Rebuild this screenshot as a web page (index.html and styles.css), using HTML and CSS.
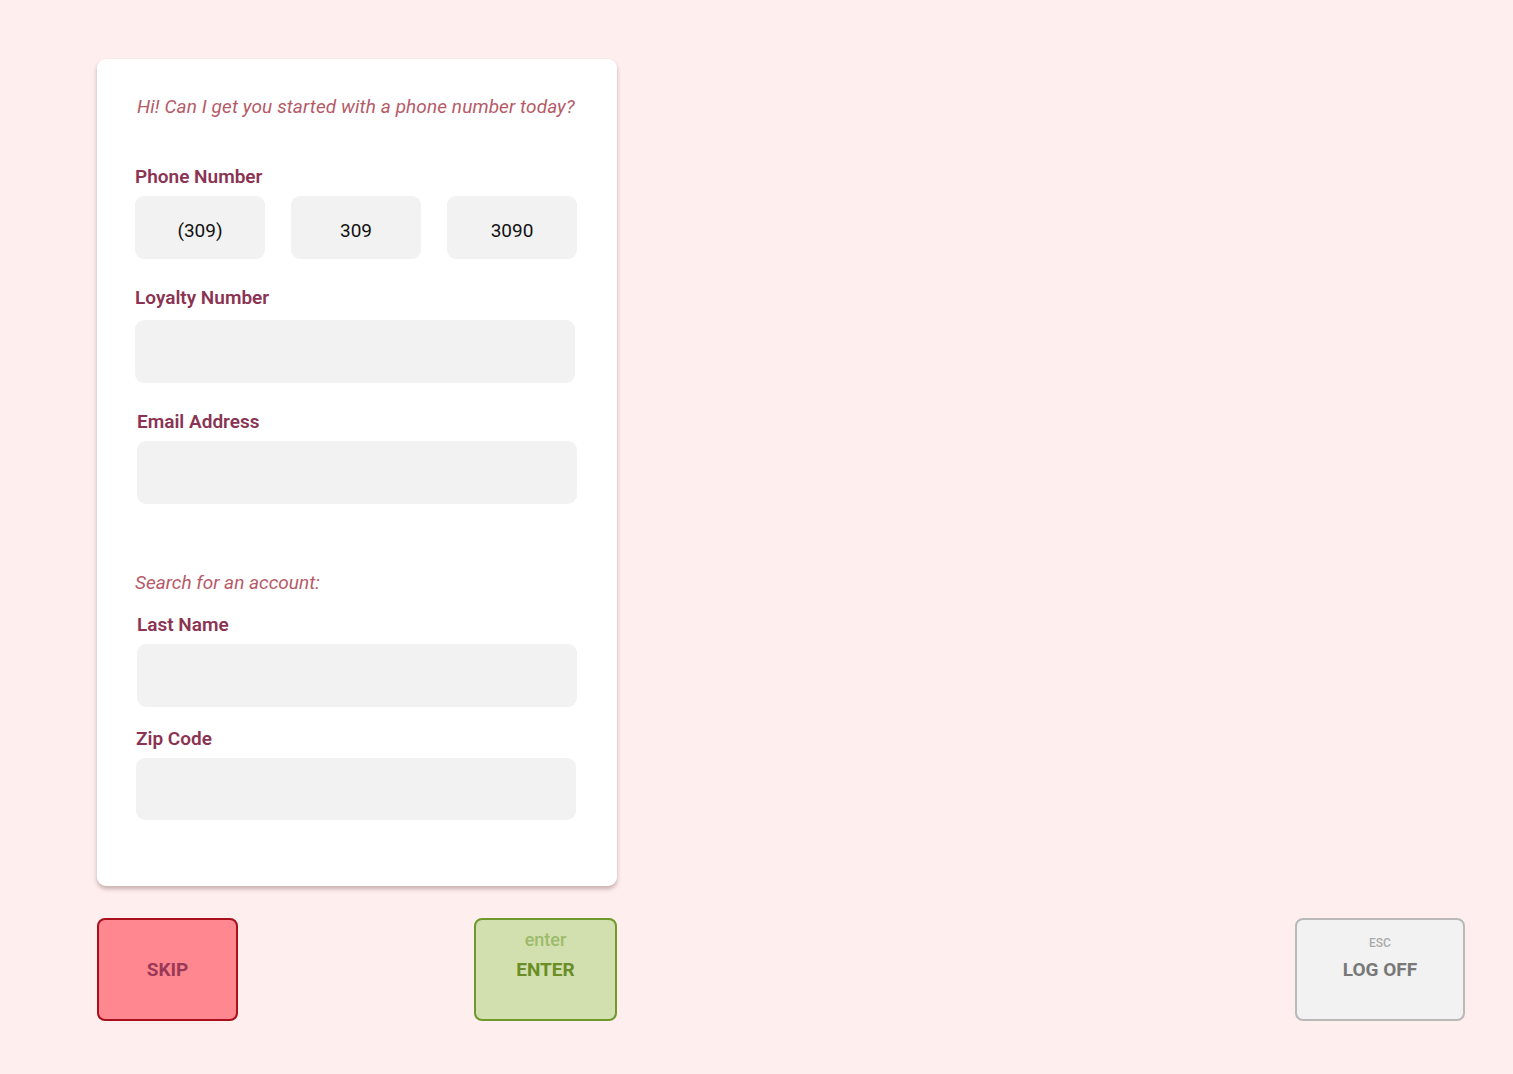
FILE: index.html
```html
<!DOCTYPE html>
<html lang="en">
<head>
<meta charset="utf-8">
<title>Customer Lookup</title>
<link rel="stylesheet" href="styles.css">
</head>
<body>
<main class="page">
  <section class="card">
    <p class="prompt greeting">Hi! Can I get you started with a phone number today?</p>

    <div class="field phone-field">
      <label class="label">Phone Number</label>
      <div class="phone-row">
        <div class="input center">(309)</div>
        <div class="input center">309</div>
        <div class="input center">3090</div>
      </div>
    </div>

    <div class="field loyalty-field">
      <label class="label">Loyalty Number</label>
      <div class="input loyalty"></div>
    </div>

    <div class="field email-field shift2">
      <label class="label">Email Address</label>
      <div class="input email"></div>
    </div>

    <p class="prompt search">Search for an account:</p>

    <div class="field lastname-field shift2">
      <label class="label">Last Name</label>
      <div class="input"></div>
    </div>

    <div class="field zip-field shift1">
      <label class="label">Zip Code</label>
      <div class="input"></div>
    </div>
  </section>

  <div class="actions">
    <div class="left-actions">
      <button class="btn skip"><span class="btn-main">SKIP</span></button>
      <button class="btn enter"><span class="btn-key">enter</span><span class="btn-main">ENTER</span></button>
    </div>
    <button class="btn logoff"><span class="btn-key small">ESC</span><span class="btn-main">LOG OFF</span></button>
  </div>
</main>
</body>
</html>
```

FILE: styles.css
```css
* { box-sizing: border-box; }

html, body {
  margin: 0;
  padding: 0;
  background: #feeeee;
  font-family: Roboto, "Liberation Sans", Arial, sans-serif;
}

.page {
  padding: 59px 48px 0 97px;
  display: flex;
  flex-direction: column;
}

.card {
  width: 520px;
  background: #ffffff;
  border-radius: 9px;
  box-shadow: 0 3px 4px rgba(120, 80, 80, 0.4);
  padding: 36px 42px 66px 38px;
  display: flex;
  flex-direction: column;
}

.prompt {
  margin: 0;
  font-style: italic;
  font-size: 19px;
  line-height: 24px;
  color: #b65a68;
}

.greeting { margin-left: 2px; letter-spacing: 0.1px; }

.field {
  display: flex;
  flex-direction: column;
}

.label {
  font-size: 19px;
  line-height: 24px;
  font-weight: 600;
  color: #8a3353;
}

.input {
  height: 63px;
  background: #f2f2f2;
  border-radius: 9px;
  margin-top: 7px;
}

.center {
  display: flex;
  align-items: center;
  justify-content: center;
  font-size: 19px;
  color: #111;
  padding-top: 6px;
}

.phone-field { margin-top: 46px; }

.phone-row {
  display: flex;
  gap: 26px;
}

.phone-row .input {
  width: 130px;
  flex: none;
}

.loyalty-field { margin-top: 27px; }
.loyalty { margin-top: 10px; }

.email-field { margin-top: 27px; }

.shift2 { margin-left: 2px; margin-right: -2px; }
.shift1 { margin-left: 1px; margin-right: -1px; }

.search { margin-top: 67px; }

.lastname-field { margin-top: 18px; }
.zip-field { margin-top: 20px; }
.zip-field .input { height: 62px; }

.actions {
  margin-top: 32px;
  display: flex;
  justify-content: space-between;
}

.left-actions {
  width: 520px;
  display: flex;
  justify-content: space-between;
}

.btn {
  height: 103px;
  border-radius: 8px;
  border: 2px solid;
  font-family: Roboto, "Liberation Sans", Arial, sans-serif;
  display: flex;
  flex-direction: column;
  align-items: center;
  justify-content: center;
  padding: 0;
  cursor: pointer;
}

.btn-main {
  font-size: 19px;
  font-weight: 700;
  line-height: 22px;
}

.btn-key {
  font-size: 18px;
  font-weight: 500;
  line-height: 20px;
  margin-top: -28px;
  margin-bottom: 9px;
}

.skip {
  width: 141px;
  background: #ff8890;
  border-color: #a8111c;
  color: #9a3957;
}

.enter {
  width: 143px;
  background: #d1e0ae;
  border-color: #6f992a;
  color: #6b8d25;
}

.enter .btn-key { color: #9dbb6c; }

.logoff {
  width: 170px;
  background: #f2f2f2;
  border-color: #b9b9b9;
  color: #787878;
}

.logoff .btn-key.small {
  font-size: 12px;
  line-height: 14px;
  color: #aaaaaa;
  margin-top: -22px;
  margin-bottom: 9px;
}
```
